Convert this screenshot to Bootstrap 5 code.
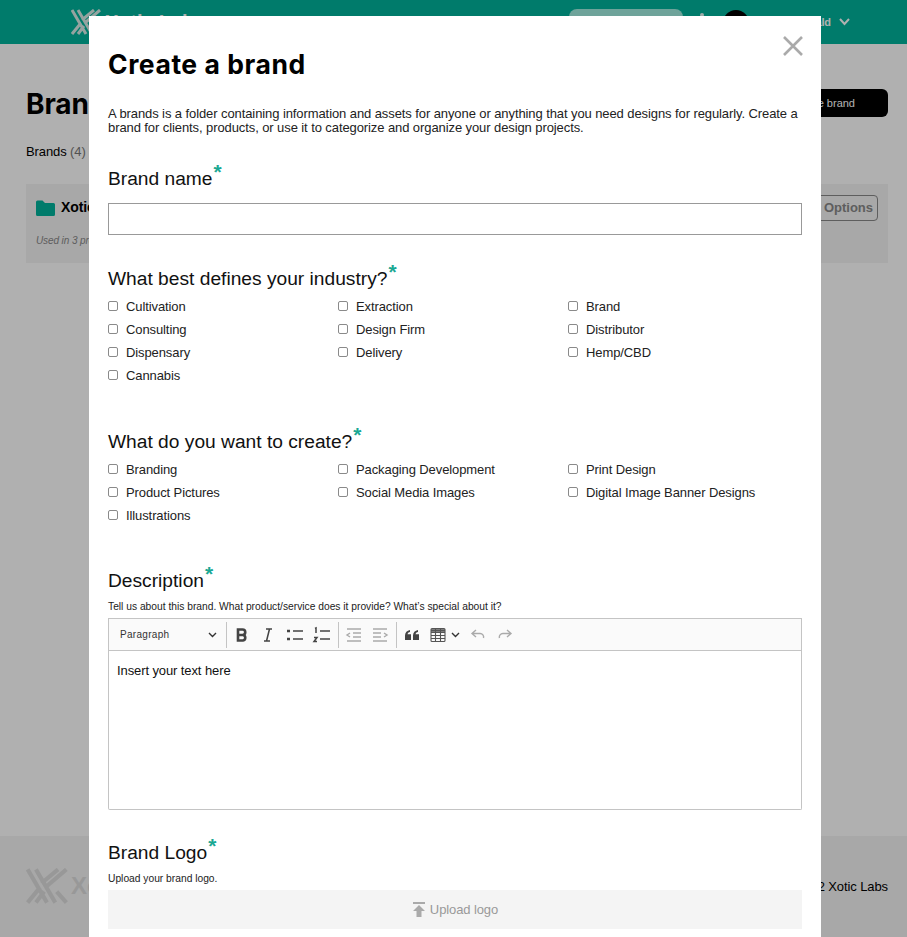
<!DOCTYPE html>
<html lang="en">
<head>
    <meta charset="UTF-8">
    <title>Create a brand</title>
    <link href="https://cdn.jsdelivr.net/npm/bootstrap@5.3.0/dist/css/bootstrap.min.css" rel="stylesheet">
    <style>
        html, body { height: 937px; overflow: hidden; }
        body { background: #fff; font-family: "Liberation Sans", Arial, sans-serif; color: #000; font-size: 13px; letter-spacing: -.1px; }

        .top-bar { height: 44px; background: #00b39b; padding: 0 57px 0 71px; }
        .logo-word { font-size: 20px; font-weight: 700; color: #fff; margin-left: 4px; }
        .search-pill { width: 114px; height: 34px; margin-top: 8px; margin-right: 17px; border-radius: 8px; background: #a0ecdf; }
        .bell-tip { width: 4px; height: 4px; margin-top: -14px; margin-right: 19px; border-radius: 50%; background: #e8f8f5; }
        .avatar-dot { width: 26px; height: 26px; margin-top: 2px; border-radius: 50%; background: #000; }
        .user-name { color: #fff; font-size: 11px; font-weight: 700; margin-left: 45px; }

        .page-main { height: 792px; padding: 44px 19px 0 26px; }
        .page-title { font-family: Inter, sans-serif; font-size: 28px; font-weight: 700; margin: 0; }
        .new-btn { width: 170px; height: 28px; background: #000; color: #fff; border: 0; border-radius: 6px; font-size: 11px; margin-top: 1px; text-align: right; padding-right: 33px; }
        .crumb { font-size: 13px; margin-top: 20px; }
        .crumb span { color: #777; }
        .brand-row { height: 79px; margin-top: 23px; background: #f3f3f3; padding: 13px 0 0 10px; }
        .brand-name { font-size: 14px; font-weight: 700; margin-left: 6px; }
        .brand-used { font-size: 10px; font-style: italic; color: #888; margin-top: 15px; }
        .options-btn { height: 26px; margin: -2px 10px 0 0; width: 100px; border: 1px solid #888; border-radius: 4px; background: transparent; color: #888; font-size: 13px; font-weight: 700; text-align: right; padding-right: 4px; letter-spacing: 0; }

        .page-foot { height: 101px; background: #f4f4f4; padding: 32px 19px 0 26px; }
        .foot-word { color: #ddd; font-size: 24px; font-weight: 700; margin-left: 3px; }
        .foot-note { margin-top: 9px; }

        .dim-layer { position: fixed; inset: 0; background: rgba(0, 0, 0, .31); }
        .brand-sheet { position: fixed; left: 89px; top: 16px; width: 732px; height: 940px; background: #fff; padding: 0 19px 0 19px; }
        .sheet-close { position: absolute; top: 20px; right: 18px; width: 20px; height: 20px; padding: 0; border: 0; background: none; line-height: 0; }
        .sheet-title { font-family: Inter, sans-serif; font-size: 26.5px; font-weight: 700; letter-spacing: .55px; line-height: 32px; margin: 0; padding-top: 32px; }
        .sheet-intro { font-size: 13px; line-height: 14px; letter-spacing: -.09px; margin: 27px 0 0; color: #222; }
        .field-head { font-size: 19.2px; line-height: 22px; font-weight: 400; letter-spacing: 0; margin: 0; color: #111; }
        .field-head i { font-style: normal; font-weight: 700; color: #1aa893; font-size: 21px; line-height: 0; position: relative; top: -6px; margin-left: 1px; }
        .field-a { margin-top: 33px; }
        .field-b { margin-top: 33px; }
        .field-c { margin-top: 46px; }
        .field-d { margin-top: 45px; }
        .field-e { margin-top: 32px; }
        .name-box { height: 32px; border: 1px solid #999; border-radius: 0; margin-top: 13px; }
        .tick-grid { margin: 8px 0 0; display: grid; grid-template-columns: 230px 230px 1fr; row-gap: 5px; }
        .tick-item { display: flex; align-items: center; height: 18px; font-size: 13px; color: #222; }
        .tick-item input { width: 10px; height: 10px; margin: 0 8px 2px 0; border: 1px solid #8a8a8a; border-radius: 2px; background: #fff; appearance: none; flex: none; }
        .hint-text { font-size: 10.25px; line-height: 12px; margin: 9px 0 0; color: #222; letter-spacing: 0; }
        .editor-bar { height: 33px; margin-top: 5px; border: 1px solid #c4c4c4; background: #fafafa; padding: 0 0 0 11px; }
        .style-pick { width: 107px; padding-right: 10px; font-size: 10px; color: #333; letter-spacing: .3px; }
        .bar-sep { width: 1px; height: 26px; background: #c4c4c4; margin: 0 5px 0 -1px; flex: none; }
        .bar-ico { width: 20px; height: 20px; margin-right: 7px; flex: none; display: block; }
        .bar-ico.tight { margin-right: 3px; }
        .bar-ico.pull { margin-right: 6px; }
        .bar-caret { margin-right: 8px; flex: none; }
        .editor-body { height: 159px; border: 1px solid #c4c4c4; border-top: 0; border-radius: 0 0 2px 2px; padding: 12px 8px; font-size: 13px; line-height: 15px; color: #111; }
        .upload-strip { height: 39px; margin-top: 5px; background: #f4f4f4; color: #999; font-size: 13px; }
    </style>
</head>
<body>

<div class="top-bar d-flex align-items-center justify-content-between">
    <div class="d-flex align-items-center">
        <svg width="30" height="26" viewBox="0 0 30 26" fill="none" stroke="#d8ece8" stroke-width="3"><path d="M1 1l14 24M7 1l14 24M29 1L15 13M23 1L11 11M1 25l9-11M7 25l6-8M29 25l-7-8"/></svg>
        <span class="logo-word">Xotic Labs</span>
    </div>
    <div class="d-flex align-items-center">
        <div class="search-pill"></div>
        <div class="bell-tip"></div>
        <div class="avatar-dot"></div>
        <span class="user-name">Ronald</span>
        <svg class="ms-2" width="11" height="8" viewBox="0 0 11 8" fill="none" stroke="#fff" stroke-width="2"><path d="M1 1l4.500 5L10 1"/></svg>
    </div>
</div>

<div class="page-main">
    <div class="d-flex justify-content-between align-items-start">
        <h1 class="page-title">Brands</h1>
        <button class="new-btn">Create brand</button>
    </div>
    <div class="crumb">Brands <span>(4)</span></div>
    <div class="brand-row d-flex justify-content-between">
        <div>
            <div class="d-flex align-items-center">
                <svg width="19" height="16" viewBox="0 0 19 16" fill="#00b39b"><path d="M0 2a1.500 1.500 0 0 1 1.500-1.500h5L9 3h8.500A1.500 1.500 0 0 1 19 4.500v10a1.500 1.500 0 0 1-1.500 1.500h-16A1.500 1.500 0 0 1 0 14.500z"/></svg>
                <span class="brand-name">Xotic Labs</span>
            </div>
            <div class="brand-used">Used in 3 projects</div>
        </div>
        <button class="options-btn">Options</button>
    </div>
</div>

<div class="page-foot d-flex justify-content-between">
    <div class="d-flex align-items-center align-self-start">
        <svg width="42" height="36" viewBox="0 0 30 26" fill="none" stroke="#ddd" stroke-width="3"><path d="M1 1l14 24M7 1l14 24M29 1L15 13M23 1L11 11M1 25l9-11M7 25l6-8M29 25l-7-8"/></svg>
        <span class="foot-word">Xotic</span>
    </div>
    <div class="foot-note">© 2022 Xotic Labs</div>
</div>

<div class="dim-layer"></div>

<div class="brand-sheet">
    <button class="sheet-close" aria-label="Close">
        <svg width="20" height="20" viewBox="0 0 20 20" stroke="#aaa" stroke-width="2.600"><path d="M1 1l18 18M19 1L1 19"/></svg>
    </button>
    <h2 class="sheet-title">Create a brand</h2>
    <p class="sheet-intro">A brands is a folder containing information and assets for anyone or anything that you need designs for regularly. Create a brand for clients, products, or use it to categorize and organize your design projects.</p>

    <h3 class="field-head field-a">Brand name<i>*</i></h3>
    <input class="form-control name-box" type="text">

    <h3 class="field-head field-b">What best defines your industry?<i>*</i></h3>
    <div class="tick-grid">
        <label class="tick-item"><input type="checkbox">Cultivation</label>
        <label class="tick-item"><input type="checkbox">Extraction</label>
        <label class="tick-item"><input type="checkbox">Brand</label>
        <label class="tick-item"><input type="checkbox">Consulting</label>
        <label class="tick-item"><input type="checkbox">Design Firm</label>
        <label class="tick-item"><input type="checkbox">Distributor</label>
        <label class="tick-item"><input type="checkbox">Dispensary</label>
        <label class="tick-item"><input type="checkbox">Delivery</label>
        <label class="tick-item"><input type="checkbox">Hemp/CBD</label>
        <label class="tick-item"><input type="checkbox">Cannabis</label>
    </div>

    <h3 class="field-head field-c">What do you want to create?<i>*</i></h3>
    <div class="tick-grid">
        <label class="tick-item"><input type="checkbox">Branding</label>
        <label class="tick-item"><input type="checkbox">Packaging Development</label>
        <label class="tick-item"><input type="checkbox">Print Design</label>
        <label class="tick-item"><input type="checkbox">Product Pictures</label>
        <label class="tick-item"><input type="checkbox">Social Media Images</label>
        <label class="tick-item"><input type="checkbox">Digital Image Banner Designs</label>
        <label class="tick-item"><input type="checkbox">Illustrations</label>
    </div>

    <h3 class="field-head field-d">Description<i>*</i></h3>
    <p class="hint-text">Tell us about this brand. What product/service does it provide? What’s special about it?</p>
    <div class="editor-bar d-flex align-items-center">
        <div class="style-pick d-flex align-items-center justify-content-between">
            <span>Paragraph</span>
            <svg width="9" height="6" viewBox="0 0 9 6" fill="none" stroke="#333" stroke-width="1.400"><path d="M1 1l3.500 3.500L8 1"/></svg>
        </div>
        <div class="bar-sep"></div>
        <svg class="bar-ico pull" viewBox="0 0 20 20" fill="none" stroke="#444" stroke-width="2.600"><path d="M6 4.500h4.500a2.700 2.700 0 0 1 0 5.500H6zM6 10h5a2.800 2.800 0 0 1 0 5.500H6zM6 3.500v13"/></svg>
        <svg class="bar-ico" viewBox="0 0 20 20" fill="none" stroke="#444" stroke-width="1.500"><path d="M8 4h6M6 16h6M11.500 4l-3 12"/></svg>
        <svg class="bar-ico" viewBox="0 0 20 20" fill="none" stroke="#444" stroke-width="1.500"><path d="M8 6h10M8 14h10"/><path d="M2 6h3M2 14h3" stroke-width="2.600"/></svg>
        <svg class="bar-ico" viewBox="0 0 20 20" fill="none" stroke="#444" stroke-width="1.500"><path d="M8 6h10M8 14h10M3 3.500l1-.5v5M2 12.500h3l-3 4h3"/></svg>
        <div class="bar-sep"></div>
        <svg class="bar-ico pull" viewBox="0 0 20 20" fill="none" stroke="#aaa" stroke-width="1.400"><path d="M3 4h14M9 8h8M9 12h8M3 16h14"/><path d="M6 8l-3 2 3 2"/></svg>
        <svg class="bar-ico" viewBox="0 0 20 20" fill="none" stroke="#aaa" stroke-width="1.400"><path d="M3 4h14M3 8h8M3 12h8M3 16h14"/><path d="M14 8l3 2-3 2"/></svg>
        <div class="bar-sep"></div>
        <svg class="bar-ico pull" viewBox="0 0 20 20" fill="#444"><path d="M3 10.500C3 7.500 5 5.500 8 5v2c-1.500.3-2.300 1.200-2.500 2.300H9V15H3zM11 10.500c0-3 2-5 5-5.500v2c-1.500.3-2.300 1.200-2.500 2.300H17V15h-6z"/></svg>
        <svg class="bar-ico tight" viewBox="0 0 20 20" fill="none" stroke="#555" stroke-width="1.100"><rect x="3" y="3.500" width="14" height="13" rx="1"/><path d="M3 7.500h14M3 10.500h14M3 13.500h14M7.500 4v12M12.500 4v12"/><path d="M3 5.500h14" stroke-width="2.500"/></svg>
        <svg class="bar-caret" width="9" height="6" viewBox="0 0 9 6" fill="none" stroke="#333" stroke-width="1.400"><path d="M1 1l3.500 3.500L8 1"/></svg>
        <svg class="bar-ico" viewBox="0 0 20 20" fill="none" stroke="#aaa" stroke-width="1.400"><path d="M8 5L4 8.500 8 12M4 8.500h8a3.500 3.500 0 0 1 3.500 4.500"/></svg>
        <svg class="bar-ico" viewBox="0 0 20 20" fill="none" stroke="#aaa" stroke-width="1.400"><path d="M12 5l4 3.500-4 3.500M16 8.500H8a3.500 3.500 0 0 0-3.500 4.500"/></svg>
    </div>
    <div class="editor-body">Insert your text here</div>

    <h3 class="field-head field-e">Brand Logo<i>*</i></h3>
    <p class="hint-text">Upload your brand logo.</p>
    <div class="upload-strip d-flex align-items-center justify-content-center">
        <svg class="me-1" width="14" height="15" viewBox="0 0 14 15" fill="#aaa"><path d="M1 0h12v2H1zM7 3l6 6H9.500v6h-5V9H1z"/></svg>
        <span>Upload logo</span>
    </div>
</div>

</body>
</html>
